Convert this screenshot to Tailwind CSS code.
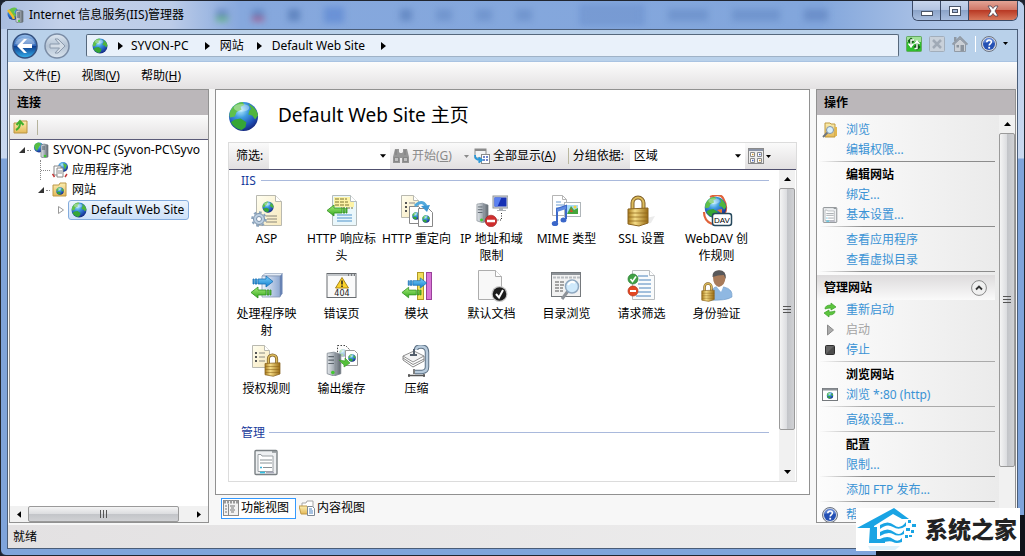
<!DOCTYPE html>
<html lang="zh-CN">
<head>
  <meta charset="UTF-8">
  <meta name="viewport" content="width=device-width, initial-scale=1.0">
  <title>Internet 信息服务(IIS)管理器</title>
  <script src="https://cdn.jsdelivr.net/npm/@tailwindcss/browser@4"></script>
</head>
<body class="bg-[#1c2230] font-['Noto_Sans','Noto_Sans_CJK_SC',sans-serif] text-xs text-black">

  <!-- Shared icon parts -->
  <svg class="absolute w-0 h-0" aria-hidden="true">
    <defs>
      <radialGradient id="sea" cx="40%" cy="28%" r="75%">
        <stop offset="0" stop-color="#b5ecff"/><stop offset=".35" stop-color="#3f9be0"/><stop offset=".75" stop-color="#1f4fb5"/><stop offset="1" stop-color="#16277a"/>
      </radialGradient>
      <linearGradient id="gold" x1="0" x2="1"><stop offset="0" stop-color="#a87a1c"/><stop offset=".35" stop-color="#f5dc86"/><stop offset="1" stop-color="#9a6c14"/></linearGradient>
      <linearGradient id="steel" x1="0" x2="1"><stop offset="0" stop-color="#e4e8ec"/><stop offset=".5" stop-color="#a3abb3"/><stop offset="1" stop-color="#5f676f"/></linearGradient>
      <linearGradient id="paper" x1="0" y1="0" x2="1" y2="1"><stop offset="0" stop-color="#fffef0"/><stop offset="1" stop-color="#f7e9bd"/></linearGradient>
      <linearGradient id="folder" x1="0" y1="0" x2="0" y2="1"><stop offset="0" stop-color="#fbeeb2"/><stop offset="1" stop-color="#e5b958"/></linearGradient>
      <linearGradient id="backBlue" x1="0" y1="0" x2="0" y2="1"><stop offset="0" stop-color="#9cc3ee"/><stop offset=".48" stop-color="#2f66b8"/><stop offset=".5" stop-color="#0d3a8c"/><stop offset="1" stop-color="#35b3ee"/></linearGradient>
      <linearGradient id="fwdGray" x1="0" y1="0" x2="0" y2="1"><stop offset="0" stop-color="#dde6f0"/><stop offset=".5" stop-color="#b4c3d4"/><stop offset="1" stop-color="#dbe5ef"/></linearGradient>
      <linearGradient id="cube" x1="0" x2="1"><stop offset="0" stop-color="#eef4fc"/><stop offset="1" stop-color="#8fa9d2"/></linearGradient>
      <linearGradient id="blueArr" x1="0" y1="0" x2="0" y2="1"><stop offset="0" stop-color="#7fd2fb"/><stop offset="1" stop-color="#0f7fd0"/></linearGradient>
      <linearGradient id="greenArr" x1="0" y1="0" x2="0" y2="1"><stop offset="0" stop-color="#a8ee7c"/><stop offset="1" stop-color="#34a81c"/></linearGradient>
    </defs>
    <symbol id="globe" viewBox="0 0 32 32">
      <circle cx="16" cy="16" r="15" fill="url(#sea)"/>
      <path d="M3 9C6 4 11 1 15 1l2 3-4 2 1 3-5 2-2 5-5 1C1 14 2 11 3 9z" fill="#5fc04a"/>
      <path d="M21 3c5 2 9 6 10 12l-3 4-3-4-4-1 1-4 2-2z" fill="#4fb53c"/>
      <path d="M7 19l6-1 6 4-1 5-4 3c-5-1-9-4-11-8z" fill="#36a636"/>
      <ellipse cx="14" cy="7" rx="8" ry="4" fill="#fff" opacity=".35"/>
    </symbol>
    <symbol id="lock" viewBox="0 0 22 32">
      <path d="M5.500 15V8a5.500 5.500 0 0 1 11 0v7" fill="none" stroke="#80602a" stroke-width="4"/>
      <path d="M5.500 15V8a5.500 5.500 0 0 1 11 0v7" fill="none" stroke="#dcbc5c" stroke-width="2"/>
      <path d="M1 14l20-1v15l-9 3-11-2z" fill="url(#gold)" stroke="#8a6420"/>
      <path d="M1 18h20M1 22h20M1 26h20" stroke="#8a6218" opacity=".7"/>
    </symbol>
    <symbol id="server" viewBox="0 0 14 22">
      <path d="M1 2l6-1 6 2v17l-6 2-6-2z" fill="url(#steel)" stroke="#7c858d" stroke-width=".7"/>
      <path d="M2 5h5M2 8h5M2 11h5" stroke="#5d666e"/>
      <path d="M8 2v19" stroke="#808890" stroke-width=".6"/>
      <circle cx="6" cy="19" r="1.600" fill="#43c832"/>
    </symbol>
    <symbol id="arrowBlue" viewBox="0 0 22 13">
      <path d="M1 4h1v5H1zM3 4h2v5H3zM6 4h8V1l7 5.500-7 5.500V9H6z" fill="url(#blueArr)" stroke="#1b6eb4" stroke-width=".8"/>
    </symbol>
    <symbol id="arrowGreen" viewBox="0 0 22 13">
      <path d="M21 4h-1v5h1zM19 4h-2v5h2zM16 4H8V1L1 6.500 8 12V9h8z" fill="url(#greenArr)" stroke="#2f8f1e" stroke-width=".8"/>
    </symbol>
    <symbol id="help" viewBox="0 0 16 16">
      <circle cx="8" cy="8" r="7.500" fill="#d5d9e2" stroke="#6b7382"/>
      <circle cx="8" cy="8" r="6" fill="#2450b4"/>
      <path d="M2.500 7a5.500 5.500 0 0 1 11 0q-5-2-11 0z" fill="#7c9fe4" opacity=".6"/>
      <path d="M5.800 6.300c0-3 4.600-3 4.600-.3C10.400 7.600 8.200 7.500 8.200 9.500" fill="none" stroke="#fff" stroke-width="1.600"/>
      <rect x="7.300" y="10.800" width="1.800" height="1.800" fill="#fff"/>
    </symbol>
    <symbol id="form" viewBox="0 0 24 26">
      <rect x="1" y="1" width="22" height="24" rx="1" fill="#eef0f2" stroke="#7a8084" stroke-width="1.400"/>
      <path d="M18 2.500h4" stroke="#5c6468"/>
      <path d="M4 22V5h3l1 1.500h11V22z" fill="#fff" stroke="#9aa0a4"/>
      <path d="M6 10.500h12M6 13.500h12M9 18h9" stroke="#8a9196" stroke-width="1.200"/>
      <path d="M6 18h2" stroke="#3bb0d8" stroke-width="1.500"/>
      <path d="M6 23h5" stroke="#30c0e4" stroke-width="1.600"/><path d="M12 23h8" stroke="#aab" stroke-width="1.600"/>
    </symbol>
    <symbol id="down" viewBox="0 0 7 4"><path d="M0 0h7L3.500 4z" fill="currentColor"/></symbol>
    <symbol id="right" viewBox="0 0 5 8"><path d="M0 0l5 4-5 4z" fill="currentColor"/></symbol>
  </svg>

  <div class="flex h-screen flex-col overflow-hidden rounded-t-lg rounded-b-md border border-[#20252f] bg-[linear-gradient(to_bottom,#bccfec_0px,#c9d8ef_157px,#7fa4db_158px,#7fa4db_100%)] px-[6px] pb-[6px]">

    <!-- Title bar -->
    <header class="-mx-[6px] flex h-7 shrink-0 items-center bg-[linear-gradient(to_right,#a9bddf_0px,#c3d1ea_60px,#bccce8_170px,#86a8dd_240px,#82a6dc_80%,#a8c0e5_90%,#b9cdeb_100%)] pl-[6px] pr-[6px]">
      <svg class="mr-1 h-4 w-[18px]" viewBox="0 0 18 16">
        <circle cx="6.500" cy="7" r="6" fill="url(#sea)"/><path d="M1 4q4-5 9-3L7 5l3 4-5 1z" fill="#67c147"/>
        <path d="M1 3q5 6 6 9" stroke="#f2bd27" stroke-width="2.500" fill="none"/>
        <path d="M9 4l3-1 4 1v11l-4 1-3-1z" fill="url(#steel)" stroke="#6c757d" stroke-width=".7"/><path d="M10 6h3M10 8h3M10 10h3" stroke="#47515a"/><circle cx="12" cy="14" r="1" fill="#41c832"/>
      </svg>
      <h1 class="shrink-0">Internet 信息服务(IIS)管理器</h1>
      <div class="ml-8 flex h-6 flex-1 items-center gap-6 overflow-hidden text-[#365a95]/50 blur-[3px]" aria-hidden="true">
        <i class="h-3 w-3 border-b-4 border-[#5fb67a] bg-[#4a6fae]/50"></i>
        <i class="h-3 w-3 border-b-4 border-[#a85a8c] bg-[#4a6fae]/50"></i>
        <i class="h-3 w-3 bg-[#4a6fae]/60"></i>
        <i class="h-4 w-5 bg-[#6a92d6]"></i>
        <i class="ml-8 h-3 w-3 bg-[#4a6fae]/50"></i>
        <i class="h-3 w-4 bg-[#4a6fae]/30"></i>
        <i class="h-3 w-4 bg-[#4a6fae]/30"></i>
        <i class="h-3 w-4 bg-[#4a6fae]/30"></i>
        <i class="ml-6 h-5 w-16 border-2 border-[#6d93d2] bg-[#4a6fae]/20"></i>
        <i class="h-3 w-10 bg-[#4a6fae]/30"></i>
        <i class="h-3 w-12 bg-[#4a6fae]/30"></i>
        <i class="h-3 w-6 bg-[#4a6fae]/40"></i>
      </div>
      <div class="flex h-5 self-start overflow-hidden rounded-b-md border border-t-0 border-[#3b4a66]">
        <button type="button" aria-label="最小化" class="flex w-7 items-center justify-center border-r border-[#3b4a66] bg-[linear-gradient(#c8d6ec,#b3c4e0_48%,#8ca4c9_50%,#a9bedf)]"><svg class="h-3 w-3" viewBox="0 0 12 12"><rect x=".5" y="6.500" width="11" height="4" fill="#fff" stroke="#4a5568"/></svg></button>
        <button type="button" aria-label="最大化" class="flex w-7 items-center justify-center border-r border-[#3b4a66] bg-[linear-gradient(#c8d6ec,#b3c4e0_48%,#8ca4c9_50%,#a9bedf)]"><svg class="h-3 w-3" viewBox="0 0 12 12"><rect x=".5" y="1.500" width="11" height="9" fill="#fff" stroke="#4a5568"/><rect x="3.500" y="4.500" width="5" height="3" fill="#a5b8d8" stroke="#4a5568"/></svg></button>
        <button type="button" aria-label="关闭" class="flex w-12 items-center justify-center bg-[linear-gradient(#e3a496,#cf7565_48%,#b93a25_50%,#d8785c)]"><svg class="h-3 w-3" viewBox="0 0 12 12"><path d="M1 1h3l2 2.500L8 1h3L8 6l3 5H8L6 8.500 4 11H1l3-5z" fill="#fff" stroke="#4b4350" stroke-width=".8"/></svg></button>
      </div>
    </header>

    <div class="flex min-h-0 flex-1 flex-col border border-[#4a5d78] bg-[#f7f7f7]">
      <!-- Address row -->
      <nav class="flex h-8 shrink-0 items-center border-b border-[#a9c3e2] bg-[#b9d1ea] pl-1">
        <button type="button" aria-label="后退"><svg class="h-[26px] w-[26px]" viewBox="0 0 26 26"><circle cx="13" cy="13" r="12" fill="url(#backBlue)" stroke="#33507f" stroke-width="1.500"/><path d="M3 11a10.500 9 0 0 1 20 0q-10 3-20 0z" fill="#fff" opacity=".3"/><path d="M5 13l7-7h3l-4.500 5H20v4h-9.500L15 20h-3z" fill="#fff"/></svg></button>
        <button type="button" aria-label="前进" class="ml-[6px]" disabled><svg class="h-[26px] w-[26px]" viewBox="0 0 26 26"><circle cx="13" cy="13" r="12" fill="url(#fwdGray)" stroke="#7a8ca5" stroke-width="1.500"/><path d="M21 13l-7-7h-3l4.500 5H6v4h9.500L11 20h3z" fill="#d3dce6" stroke="#8b9aad"/></svg></button>
        <ol class="ml-4 flex h-[23px] flex-1 items-center rounded-[2px] border border-[#56687c] border-b-[#9fb2c6] bg-[#e9f1fa] pl-[5px]">
          <li class="flex items-center"><svg class="h-4 w-4"><use href="#globe"/></svg><svg class="ml-[10px] mr-2 h-2 w-[5px]"><use href="#right"/></svg></li>
          <li class="flex items-center"><a href="#pc">SYVON-PC</a><svg class="ml-4 mr-[10px] h-2 w-[5px]"><use href="#right"/></svg></li>
          <li class="flex items-center"><a href="#sites">网站</a><svg class="ml-[13px] mr-[10px] h-2 w-[5px]"><use href="#right"/></svg></li>
          <li class="flex items-center"><a href="#default">Default Web Site</a><svg class="ml-4 h-2 w-[5px]"><use href="#right"/></svg></li>
        </ol>
        <div class="ml-[7px] flex items-center gap-[7px] pb-1">
          <button type="button" aria-label="刷新"><svg class="h-4 w-4" viewBox="0 0 16 16"><rect x=".5" y=".5" width="15" height="15" rx="1" fill="#2fc02c" stroke="#64a864"/><path d="M1 1h14v5H1z" fill="#a0e298"/><path d="M5 11V5M2.500 6L5 3.500 7.500 6M11 5v6M8.500 10l2.500 2.500L13.500 10" fill="none" stroke="#155a18" stroke-width="3"/><path d="M8 4H5v7M2.500 7.500L5 11l2.500-3.500M8.500 12.500H11V5M8.500 8L11 5l2.500 3" fill="none" stroke="#fff" stroke-width="1.400"/></svg></button>
          <button type="button" aria-label="停止加载" disabled><svg class="h-4 w-4" viewBox="0 0 16 16"><rect x=".5" y=".5" width="15" height="15" rx="1" fill="#c9d1da" stroke="#a2aebb"/><path d="M4 4l8 8M12 4l-8 8" stroke="#a0aab6" stroke-width="2.500"/></svg></button>
          <button type="button" aria-label="主页" disabled><svg class="h-4 w-4" viewBox="0 0 16 16"><path d="M2 1h2.500v4H2z" fill="#8e98a3"/><path d="M2.500 8L8 3l5.500 5v7.500h-11z" fill="#cbd0d6" stroke="#929ba5"/><path d="M.5 8.500L8 1l7.500 7.500" fill="none" stroke="#929ba5" stroke-width="1.800"/><path d="M8.500 9H12v6H8.500zM4.500 9H7v2.500H4.500z" fill="#8b949e"/></svg></button>
          <span class="h-4 w-px bg-white"></span>
          <button type="button" aria-label="帮助" class="-ml-[2px] mr-[9px] flex items-center gap-[6px]"><svg class="h-4 w-4"><use href="#help"/></svg><svg class="h-[3px] w-[5px]"><use href="#down"/></svg></button>
        </div>
      </nav>

      <!-- Menu bar -->
      <div role="menubar" class="flex h-[27px] shrink-0 items-center gap-[21px] bg-[linear-gradient(#fcfcfc,#e3e1e2)] pl-[15px]">
        <button type="button" role="menuitem">文件(<u>F</u>)</button>
        <button type="button" role="menuitem">视图(<u>V</u>)</button>
        <button type="button" role="menuitem">帮助(<u>H</u>)</button>
      </div>

      <main class="flex min-h-0 flex-1 gap-[6px] px-px">
        <!-- Connections -->
        <section class="mb-[2px] flex w-[200px] shrink-0 flex-col border border-[#919191] bg-white">
          <h2 class="flex h-[25px] shrink-0 items-center bg-[#bbb7ba] pl-[7px] font-bold">连接</h2>
          <div class="flex h-[25px] shrink-0 items-center border-b border-[#5a5a78] bg-[linear-gradient(#fbfbfb,#e4e2e3)] pl-[3px]">
            <button type="button" aria-label="向上"><svg class="h-4 w-4" viewBox="0 0 16 16"><path d="M1 4h6l1-2h6v12H1z" fill="url(#folder)" stroke="#b99442"/><path d="M3 11q4-2 4-7M3.500 6L7 2l3.500 4" fill="none" stroke="#41b02d" stroke-width="2"/></svg></button>
            <span class="ml-2 h-[15px] w-px bg-[#b5b39c]"></span>
          </div>
          <ul class="min-h-0 flex-1 overflow-hidden whitespace-nowrap" role="tree">
            <li role="treeitem" class="flex h-5 w-max items-center pl-[9px]">
              <svg class="h-[6px] w-[6px]" viewBox="0 0 6 6"><path d="M6 0v6H0z" fill="#333"/></svg>
              <i class="mx-[2px] w-1 border-t border-dotted border-[#888]"></i>
              <svg class="mr-1 h-4 w-4" viewBox="0 0 16 16"><circle cx="6" cy="5.500" r="5" fill="url(#sea)"/><path d="M2 2q4-3 6 0L6 5l-2 4q-4-3-2-7z" fill="#56bd42"/><path d="M8 3l3-1 4 1v12l-4 1-3-1z" fill="url(#steel)" stroke="#747d85" stroke-width=".7"/><path d="M9 5h3M9 7h3" stroke="#515b64"/><circle cx="12" cy="14" r="1.300" fill="#41c832"/></svg>
              SYVON-PC (Syvon-PC\Syvo
            </li>
            <li role="treeitem" class="flex h-5 items-center pl-[30px]">
              <i class="h-5 border-l border-dotted border-[#888]"></i>
              <i class="mr-[2px] w-[9px] border-t border-dotted border-[#888]"></i>
              <svg class="mr-1 h-4 w-4" viewBox="0 0 16 16"><circle cx="11" cy="5" r="5" fill="url(#sea)"/><path d="M11 1l4 2-2 5z" fill="#54ba40"/><path d="M2 4h7v9H2z" fill="#fff" stroke="#888"/><path d="M5 6h6v9H5z" fill="#fff" stroke="#888"/><path d="M6 9h4M6 11h4" stroke="#8d8d8d"/><path d="M.5 12l2 3M13 15l2-3" stroke="#c43737" stroke-width="1.500"/></svg>
              应用程序池
            </li>
            <li role="treeitem" class="flex h-5 items-center pl-[28px]">
              <svg class="h-[6px] w-[6px]" viewBox="0 0 6 6"><path d="M6 0v6H0z" fill="#333"/></svg>
              <i class="mx-[2px] w-1 border-t border-dotted border-[#888]"></i>
              <svg class="mr-1 h-4 w-4" viewBox="0 0 16 16"><path d="M1 3h6l1-2h6v13H1z" fill="url(#folder)" stroke="#bd9846"/><use href="#globe" x="4" y="5" width="8" height="8"/></svg>
              网站
            </li>
            <li role="treeitem" class="flex h-5 items-center pl-12" aria-selected="true">
              <svg class="h-2 w-[6px]" viewBox="0 0 6 8"><path d="M.5.5l5 3.500-5 3.500z" fill="#fff" stroke="#9a9a9a"/></svg>
              <span class="ml-1 flex h-5 items-center rounded-[3px] border border-[#84acdd] bg-[linear-gradient(#ecf4fd,#cde1f9)] px-1 pl-[2px]"><svg class="mr-1 h-4 w-4"><use href="#globe"/></svg>Default Web Site</span>
            </li>
          </ul>
          <div class="flex h-4 shrink-0 items-stretch bg-[#f1f1f1]" aria-hidden="true">
            <span class="flex w-[18px] items-center justify-center"><svg class="h-[7px] w-1 rotate-180"><use href="#right" width="4" height="7"/></svg></span>
            <span class="flex-1"><span class="flex h-full w-[93%] items-center justify-center gap-[2px] rounded-[2px] border border-[#9a9a9a] bg-[linear-gradient(#f4f4f4,#dcdde0_48%,#c3c5c9_52%,#d0d1d4)]"><i class="h-2 w-px bg-[#555]"></i><i class="h-2 w-px bg-[#555]"></i><i class="h-2 w-px bg-[#555]"></i></span></span>
            <span class="flex w-[18px] items-center justify-center"><svg class="h-[7px] w-1"><use href="#right" width="4" height="7"/></svg></span>
          </div>
        </section>

        <!-- Feature view -->
        <section class="flex min-w-0 flex-1 flex-col">
          <div class="flex min-h-0 flex-1 flex-col border border-[#919191] bg-white px-3 pb-3">
            <h2 class="flex h-[52px] shrink-0 items-center text-[19px]"><svg class="mr-[19px] h-[31px] w-[31px]"><use href="#globe"/></svg>Default Web Site 主页</h2>
            <div class="flex min-h-0 flex-1 flex-col border border-[#dcdcdc]">
              <div class="flex h-[27px] shrink-0 items-center whitespace-nowrap border-b border-[#50506e] bg-[linear-gradient(#fafafa,#e2e0e1)] pl-[7px]">
                <label for="filter" class="w-[33px]">筛选:</label>
                <div class="relative w-[121px] self-stretch">
                  <input id="filter" type="text" class="h-full w-full bg-white px-1 outline-none">
                  <svg class="absolute top-[11px] right-1 h-1 w-[6px]"><use href="#down" width="6" height="4"/></svg>
                </div>
                <button type="button" class="ml-[3px] flex items-center text-[#8a8a8a]" disabled>
                  <svg class="mr-[3px] h-4 w-4" viewBox="0 0 16 16"><path d="M2 1h4v3l1 1h2l1-1V1h4l2 8v6H9v-5H7v5H0V9z" fill="#969696"/><path d="M1.500 9.500h4v4h-4zM10.500 9.500h4v4h-4zM3 2v5M12 2v5" fill="#c0c0c0" stroke="#777" stroke-width=".7"/></svg>
                  开始(<u>G</u>)<svg class="ml-3 h-[3px] w-[5px]"><use href="#down" width="5" height="3"/></svg>
                </button>
                <button type="button" class="ml-[5px] flex items-center">
                  <svg class="mr-[3px] h-4 w-4" viewBox="0 0 16 16"><rect x="1" y="1" width="11" height="9" fill="#f4f4f4" stroke="#8b8b8b"/><path d="M1 2h11" stroke="#8b8b8b" stroke-width="2"/><rect x="7.500" y="6.500" width="8" height="9" fill="#fff" stroke="#8b8b8b"/><path d="M9 9h2M12 9h2M9 12h2M12 12h2" stroke="#4660b8" stroke-width="1.500"/><path d="M1 7q0 5 5 5M4.500 9.500L8 12l-3.500 2.500" fill="none" stroke="#2897d8" stroke-width="1.800"/></svg>
                  全部显示(<u>A</u>)
                </button>
                <span class="ml-3 mr-1 h-4 w-px bg-[#bab89f]"></span>
                <label for="group" class="w-[57px]">分组依据:</label>
                <div class="relative w-[115px] self-stretch">
                  <select id="group" class="h-full w-full appearance-none bg-white pl-1 outline-none"><option>区域</option><option>类别</option><option>不分组</option></select>
                  <svg class="pointer-events-none absolute top-[11px] right-1 h-1 w-[6px]"><use href="#down" width="6" height="4"/></svg>
                </div>
                <button type="button" aria-label="视图" class="ml-[3px] flex items-center gap-[2px]">
                  <svg class="h-4 w-4" viewBox="0 0 16 16"><rect x=".5" y=".5" width="15" height="15" fill="#eee" stroke="#8a8a8a"/><path d="M1 2h14" stroke="#8a93a6" stroke-width="2"/><path d="M2.500 4.500h4v4h-4zM9.500 4.500h4v4h-4zM2.500 10.500h4v4h-4zM9.500 10.500h4v4h-4z" fill="#fff" stroke="#8a8a8a"/><path d="M4 6.500h1.500M11 12.500h1.500" stroke="#d89c30" stroke-width="1.500"/><path d="M11 6.500h1.500M4 12.500h1.500" stroke="#4562c4" stroke-width="1.500"/></svg>
                  <svg class="h-[3px] w-[5px]"><use href="#down" width="5" height="3"/></svg>
                </button>
              </div>

              <div class="flex min-h-0 flex-1">
                <div class="min-w-0 flex-1 overflow-hidden">
                  <h3 class="mr-[10px] flex h-[25px] items-center gap-[5px] pb-1 pl-3 text-[#1a3c9c]">IIS<span class="h-px flex-1 bg-[#a9b9dc]"></span></h3>
                  <ul class="grid grid-cols-[repeat(auto-fill,75px)] auto-rows-[75px] text-center leading-[17px]">
                    <li class="px-[2px]">
                      <svg class="mx-auto mb-[3px] h-8 w-8" viewBox="0 0 32 32"><path d="M5.500.5h19l6 6v24h-25z" fill="url(#paper)" stroke="#b9b9b0"/><path d="M24.500.5v6h6" fill="#fff" stroke="#b9b9b0"/><use href="#globe" x="11" y="6" width="12" height="12"/><path d="M15 21h11M16 24h10M15 27h11" stroke="#8a8678"/><circle cx="8" cy="24" r="5.500" fill="#bed0e2" stroke="#7890aa"/><circle cx="8" cy="24" r="6.800" fill="none" stroke="#8aa2bb" stroke-width="2" stroke-dasharray="2.700 2.600"/><circle cx="8" cy="24" r="2.500" fill="#fff" stroke="#7890aa"/></svg>
                      ASP
                    </li>
                    <li class="px-[2px]">
                      <svg class="mx-auto mb-[3px] h-8 w-8" viewBox="0 0 32 32"><path d="M6.500.5h18l6 6v24h-24z" fill="#eaf7fb" stroke="#b4bcbc"/><path d="M8 2h16l4 4v6H8z" fill="#fdf3a6"/><path d="M24.500.5v6h6" fill="#fff" stroke="#b4bcbc"/><path d="M9 4h12M9 7h4M14 7h8M9 10h14M15 13h12" stroke="#7c7430" stroke-dasharray="4 1"/><path d="M11 20h15M11 23h15M11 26h15" stroke="#4f93cc" stroke-width="1.200"/><use href="#arrowGreen" x="0" y="8" width="22" height="15"/></svg>
                      HTTP 响应标头
                    </li>
                    <li class="px-[2px]">
                      <svg class="mx-auto mb-[3px] h-8 w-8" viewBox="0 0 32 32"><path d="M.5.5h12l5 5v17H.5z" fill="url(#paper)" stroke="#b9b9b0"/><path d="M12.500.5v5h5" fill="#fff" stroke="#b9b9b0"/><path d="M4 8h2M4 12h2M4 16h2" stroke="#555" stroke-width="2"/><path d="M8 8h6M8 12h5M8 16h5" stroke="#888"/><path d="M8.500 11.500h9l3 3v14h-12z" fill="#fff" stroke="#888"/><use href="#globe" x="11" y="17" width="8" height="8"/><path d="M17.500 13.500h10l4 4v14h-14z" fill="#fff" stroke="#888"/><use href="#globe" x="21" y="20" width="8" height="8"/><path d="M14 11q7-7 11 0" fill="none" stroke="#52a9dc" stroke-width="3"/><path d="M20 11l9-1-3 7z" fill="#3c97d3"/></svg>
                      HTTP 重定向
                    </li>
                    <li class="px-[2px]">
                      <svg class="mx-auto mb-[3px] h-8 w-8" viewBox="0 0 32 32"><use href="#server" x="0" y="7" width="13" height="21"/><rect x="17" y="1" width="15" height="12" fill="#d8dadc" stroke="#8e9499"/><rect x="18.500" y="2.500" width="12" height="9" fill="#1630b4"/><path d="M18.500 2.500h7l-4 9h-3z" fill="#5a80f0"/><path d="M23 13h4v2h3v1h-9v-1h2z" fill="#a9aeb3"/><path d="M25.500 18v7H21" fill="none" stroke="#333" stroke-dasharray="1 1.500"/><circle cx="15" cy="26" r="5.800" fill="#cf2e2e" stroke="#9b1c1c" stroke-width=".6"/><path d="M11 26h8" stroke="#fff" stroke-width="2.400"/></svg>
                      IP 地址和域限制
                    </li>
                    <li class="px-[2px]">
                      <svg class="mx-auto mb-[3px] h-8 w-8" viewBox="0 0 32 32"><path d="M1.500.5h10l4 4v16h-14z" fill="#fff" stroke="#b5b5b5"/><path d="M11.500.5v4h4" fill="none" stroke="#b5b5b5"/><path d="M5 7h5M5 10h8M5 13h4" stroke="#6a9cd0"/><rect x="13.500" y="7.500" width="16" height="14" fill="#fff" stroke="#b0b6ba"/><rect x="16" y="10" width="11" height="9" fill="#a6dbf8"/><path d="M16 19l4-8 3 4 4-2v6z" fill="#45a63b"/><circle cx="24" cy="12" r="1.500" fill="#f5d23c"/><path d="M20 13l2 4h-3z" fill="#d34e2a"/><path d="M6 27V14l9-3v13" fill="none" stroke="#3c68c8" stroke-width="2"/><path d="M6 14l9-3v3l-9 3z" fill="#5d8ae0"/><ellipse cx="4" cy="28.500" rx="3.200" ry="2.600" fill="#3b67c9"/><ellipse cx="12.500" cy="25" rx="3" ry="2.500" fill="#3b67c9"/></svg>
                      MIME 类型
                    </li>
                    <li class="px-[2px]">
                      <svg class="mx-auto mb-[3px] h-8 w-8" viewBox="0 0 32 32"><path d="M20 23l9-2-4 7-7 2z" fill="#000" opacity=".08"/><use href="#lock" x="1" y="0" width="22" height="32"/></svg>
                      SSL 设置
                    </li>
                    <li class="px-[2px]">
                      <svg class="mx-auto mb-[3px] h-8 w-8" viewBox="0 0 32 32"><path d="M9 2q10-4 13 1 7 12-2 20M3 17q0 9 8 12" fill="none" stroke="#e0633a" stroke-width="2.200"/><use href="#globe" x="3" y="1" width="23" height="23"/><path d="M16 15l5-1v5z" fill="#ee7a30"/><rect x="11.500" y="18.500" width="19" height="12" rx="2.500" fill="#fff" stroke="#26485c" stroke-width="1.500"/><text x="21" y="27.500" text-anchor="middle" font-size="8" font-family="Liberation Sans, sans-serif" fill="#000">DAV</text></svg>
                      WebDAV 创作规则
                    </li>
                    <li class="px-[2px]">
                      <svg class="mx-auto mb-[3px] h-8 w-8" viewBox="0 0 32 32"><path d="M11 6l3-2.500h17.500L29 6z" fill="#e4ecf7" stroke="#8798b4" stroke-width=".6"/><path d="M11 6h18v21H11z" fill="url(#cube)" stroke="#8798b4" stroke-width=".8"/><path d="M29 6l2.500-2.500v20L29 27z" fill="#6883b4"/><use href="#arrowBlue" x="1" y="5" width="22" height="13"/><use href="#arrowGreen" x="-1" y="16" width="22" height="13"/></svg>
                      处理程序映射
                    </li>
                    <li class="px-[2px]">
                      <svg class="mx-auto mb-[3px] h-8 w-8" viewBox="0 0 32 32"><rect x="1" y="3.500" width="29" height="24" fill="#fafafa" stroke="#686c70"/><path d="M1.500 5h28" stroke="#c2c6ca" stroke-width="2"/><path d="M22 5h1M25 5h1M28 5h1" stroke="#333"/><path d="M16 7.500L22.500 18h-13z" fill="#fcd329" stroke="#a8851c"/><path d="M16 10.500v4M16 15.500v1.500" stroke="#222" stroke-width="1.500"/><text x="16" y="26" text-anchor="middle" font-size="8" font-family="DejaVu Sans, sans-serif" fill="#222">404</text></svg>
                      错误页
                    </li>
                    <li class="px-[2px]">
                      <svg class="mx-auto mb-[3px] h-8 w-8" viewBox="0 0 32 32"><rect x="16.500" y="2.500" width="6" height="27" fill="#f2df5a" stroke="#b09a26"/><rect x="25.500" y="2.500" width="5" height="27" fill="#d976d6" stroke="#99419a"/><use href="#arrowBlue" x="6" y="7" width="21" height="12"/><use href="#arrowGreen" x="0" y="16" width="21" height="13"/></svg>
                      模块
                    </li>
                    <li class="px-[2px]">
                      <svg class="mx-auto mb-[3px] h-8 w-8" viewBox="0 0 32 32"><path d="M2.500.5h17l6 6v23h-23z" fill="#f8f8f8" stroke="#adadad"/><path d="M19.500.5v6h6" fill="#fff" stroke="#adadad"/><circle cx="23.500" cy="24" r="8" fill="#c8c8c8"/><circle cx="23.500" cy="24" r="6.800" fill="#1c1c1c"/><path d="M20 24l3 3.500 4-7.500" fill="none" stroke="#fff" stroke-width="2"/></svg>
                      默认文档
                    </li>
                    <li class="px-[2px]">
                      <svg class="mx-auto mb-[3px] h-8 w-8" viewBox="0 0 32 32"><rect x=".5" y="2.500" width="29" height="24" fill="#f2f2f2" stroke="#75797d"/><path d="M1 4h28" stroke="#8f9499" stroke-width="2"/><path d="M2 7.500h27" stroke="#b9bdc1" stroke-width="2" stroke-dasharray="3 1"/><path d="M4 12h10M4 15h10M4 18h8M4 21h8" stroke="#555" stroke-dasharray="4 1"/><path d="M17 21l-6 8" stroke="#8d9298" stroke-width="3"/><circle cx="21" cy="16.500" r="6.500" fill="#cfe9fb" stroke="#8fa8c0" stroke-width="1.500"/><path d="M17 15q3-5 7-2" stroke="#fff" stroke-width="2" fill="none"/></svg>
                      目录浏览
                    </li>
                    <li class="px-[2px]">
                      <svg class="mx-auto mb-[3px] h-8 w-8" viewBox="0 0 32 32"><path d="M6.500.5h17l5 5v24h-22z" fill="#f9fbfc" stroke="#b9bdc0"/><path d="M23.500.5v5h5" fill="#fff" stroke="#b9bdc0"/><path d="M12 6h10M13 10h12M12 14h13M13 18h12M12 22h13M10 26h15" stroke="#4c84bc"/><circle cx="7" cy="9" r="5" fill="#3fa245" stroke="#2b7a34" stroke-width=".7"/><path d="M4.500 9l2 2.500L10 6.500" fill="none" stroke="#fff" stroke-width="1.600"/><circle cx="7" cy="21" r="5" fill="#e34824" stroke="#b03214" stroke-width=".7"/><path d="M4 21h6" stroke="#fff" stroke-width="2"/></svg>
                      请求筛选
                    </li>
                    <li class="px-[2px]">
                      <svg class="mx-auto mb-[3px] h-8 w-8" viewBox="0 0 32 32"><path d="M8 30q0-12 9-14l6 1q9 2 8 10-6 4-23 3z" fill="#8fb8e2" stroke="#6f98c4" stroke-width=".6"/><path d="M15 16l5 6 3-7z" fill="#fff"/><path d="M12 7q0-6 6-6.500 7 0 6.500 7-.5 8-6.500 9.500-6-2-6-10z" fill="#a97b5a"/><path d="M11.500 7Q11 .5 18 .3q7.500 0 6.800 8.700l-2-4q-6 0-11.300 2z" fill="#58585a"/><use href="#lock" x="0" y="12" width="14" height="20"/></svg>
                      身份验证
                    </li>
                    <li class="px-[2px]">
                      <svg class="mx-auto mb-[3px] h-8 w-8" viewBox="0 0 32 32"><path d="M1.500.5h12l5 5v17h-17z" fill="url(#paper)" stroke="#b9b9b0"/><path d="M13.500.5v5h5" fill="#fff" stroke="#b9b9b0"/><path d="M4 8h2M4 12h2M4 16h2" stroke="#555" stroke-width="2"/><path d="M8 8h6M8 12h6M8 16h6" stroke="#8a8a80"/><use href="#lock" x="13" y="8" width="17" height="24"/></svg>
                      授权规则
                    </li>
                    <li class="px-[2px]">
                      <svg class="mx-auto mb-[3px] h-8 w-8" viewBox="0 0 32 32"><path d="M11.500.5h8l4 4v14h-12z" fill="#fdfdfd" stroke="#444" stroke-dasharray="1.500 1.500"/><use href="#globe" x="13" y="4" width="8" height="8" opacity=".4"/><use href="#server" x="0" y="6" width="16" height="25"/><path d="M19.500 5.500h9l3 3v12h-12z" fill="#fff" stroke="#999"/><use href="#globe" x="22" y="9" width="8" height="8"/><path d="M13 15l6 1v-3l5 5-6 4v-2z" fill="#55c03b" stroke="#369624" stroke-width=".6"/></svg>
                      输出缓存
                    </li>
                    <li class="px-[2px]">
                      <svg class="mx-auto mb-[3px] h-8 w-8" viewBox="0 0 32 32"><path d="M15 5q0-3.500 5-3.500 6 0 6 6V22q0 4.500-5 5h-7" fill="none" stroke="#5e7286" stroke-width="4.500"/><path d="M15 5q0-3.500 5-3.500 6 0 6 6V22q0 4.500-5 5h-7" fill="none" stroke="#b8cbdc" stroke-width="2.500"/><path d="M2 11l11-5 10 5-11 6z" fill="#f4f4f4" stroke="#777" stroke-width=".8"/><path d="M2 11v4l10 7 11-6v-5M2 13l10 6.500L23 14" fill="none" stroke="#888"/><path d="M13 4v6M9 10h7" stroke="#55606c" stroke-width="2"/><path d="M13 24v5M7 30.500h17M8 29v3M23 29v3" stroke="#555" stroke-width="1.500"/></svg>
                      压缩
                    </li>
                  </ul>
                  <h3 class="mt-[2px] mr-[10px] flex h-[25px] items-center gap-1 pb-1 pl-3 text-[#1a3c9c]">管理<span class="h-px flex-1 bg-[#a9b9dc]"></span></h3>
                  <ul class="grid grid-cols-[repeat(auto-fill,75px)]">
                    <li class="px-[2px]"><svg class="mx-auto h-8 w-8" viewBox="0 0 32 32"><use href="#form" x="3" y="2" width="24" height="27"/></svg></li>
                  </ul>
                </div>
                <div class="mr-px flex w-4 flex-col bg-[#f1f1f1]" aria-hidden="true">
                  <span class="flex h-[18px] items-center justify-center"><svg class="h-1 w-[7px] rotate-180"><use href="#down"/></svg></span>
                  <span class="min-h-0 flex-1"><span class="flex h-[88%] flex-col items-center justify-center gap-[2px] rounded-[2px] border border-[#9a9a9a] bg-[linear-gradient(to_right,#f4f4f4,#dcdde0_48%,#c3c5c9_52%,#d0d1d4)]"><i class="h-px w-2 bg-[#555]"></i><i class="h-px w-2 bg-[#555]"></i><i class="h-px w-2 bg-[#555]"></i></span></span>
                  <span class="flex h-[18px] items-center justify-center"><svg class="h-1 w-[7px]"><use href="#down"/></svg></span>
                </div>
              </div>
            </div>
          </div>
          <div class="flex h-[30px] shrink-0 items-center gap-[2px] pb-1 pl-[6px]">
            <button type="button" class="flex h-[21px] items-center gap-[2px] border border-[#3399ff] bg-white pl-px pr-[6px]">
              <svg class="h-4 w-4" viewBox="0 0 16 16"><rect x=".5" y=".5" width="15" height="15" fill="#f2f2f2" stroke="#8a8a8a"/><path d="M1 2h14" stroke="#9a9a9a" stroke-width="3" stroke-dasharray="2 1"/><path d="M5.500 4v11" stroke="#8a8a8a"/><path d="M2 6h2M2 9h2M2 12h2M7 6h5M8 8h3M7 10h5M8 12h3" stroke="#777"/></svg>功能视图
            </button>
            <button type="button" class="flex h-[21px] items-center gap-[2px] pl-px">
              <svg class="h-4 w-4" viewBox="0 0 16 16"><path d="M3 3h4l1-2h6v10H3z" fill="#fff" stroke="#a5a5a5"/><path d="M0 6h8l3 8H2z" fill="url(#folder)" stroke="#c09a48"/><path d="M8.500 6.500h5l2 2v7h-7z" fill="#fff" stroke="#7d8894"/><path d="M10 9h3M10 11h4M10 13h4" stroke="#4f86c4"/></svg>内容视图
            </button>
          </div>
        </section>

        <!-- Actions -->
        <aside class="mb-[2px] flex w-[200px] shrink-0 flex-col border border-[#919191]">
          <h2 class="flex h-[25px] shrink-0 items-center bg-[#bbb7ba] pl-[7px] font-bold">操作</h2>
          <div class="flex min-h-0 flex-1 bg-[linear-gradient(to_right,#fcfcfc,#e9e9e9)]">
            <div class="min-w-0 flex-1 overflow-hidden pt-[5px] pr-1 pl-[2px] leading-5 text-[#3a93d5]">
              <a href="#explore" class="flex h-5 items-center gap-2 pl-[3px]"><svg class="h-4 w-4" viewBox="0 0 16 16"><path d="M3 1h5l1 1h4v13H3z" fill="url(#folder)" stroke="#c09a3e"/><path d="M13 5h2v9h-2" fill="#e3b850"/><path d="M6 10l-5 5" stroke="#6f7780" stroke-width="2"/><circle cx="8" cy="8" r="3.500" fill="#d8effc" stroke="#7e93a8"/></svg>浏览</a>
              <a href="#permissions" class="block pl-[27px]">编辑权限...</a>
              <hr class="mt-px mb-[3px] h-px border-0 bg-[linear-gradient(to_right,transparent,#8c8c8c_25%)]">
              <h3 class="pl-[27px] font-bold text-black">编辑网站</h3>
              <a href="#bindings" class="block pl-[27px]">绑定...</a>
              <a href="#basic" class="flex h-5 items-center gap-2 pl-[3px]"><svg class="h-4 w-4"><use href="#form"/></svg>基本设置...</a>
              <hr class="mt-px mb-[3px] h-px border-0 bg-[linear-gradient(to_right,transparent,#8c8c8c_25%)]">
              <a href="#apps" class="block pl-[27px]">查看应用程序</a>
              <a href="#vdirs" class="block pl-[27px]">查看虚拟目录</a>
              <hr class="mt-px mb-[3px] h-px border-0 bg-[linear-gradient(to_right,transparent,#8c8c8c_25%)]">
              <h3 class="-ml-[2px] flex h-[25px] items-center justify-between bg-[linear-gradient(#dddbdc,#fafafa)] pr-2 pl-[7px] font-bold text-black">管理网站
                <button type="button" aria-label="折叠"><svg class="h-4 w-4" viewBox="0 0 16 16"><circle cx="8" cy="8" r="7.400" fill="#f0f0f0" stroke="#888"/><path d="M5 9.500l3-3 3 3" fill="none" stroke="#333" stroke-width="1.800"/></svg></button>
              </h3>
              <a href="#restart" class="flex h-5 items-center gap-2 pl-[3px]"><svg class="h-4 w-4" viewBox="0 0 16 16"><path d="M3 7q0-4 6-4V1l5 4-5 3V6Q6 6 3 7zM13 9q0 4-6 4v2l-5-4 5-3v2q3 0 6-1z" fill="#5cc63e" stroke="#3c9e2a" stroke-width=".7"/></svg>重新启动</a>
              <button type="button" class="flex h-5 w-full items-center gap-2 pl-[3px] text-[#a3a3a3]" disabled><svg class="h-4 w-4" viewBox="0 0 16 16"><path d="M5.500 3l6 5-6 5z" fill="#ababab" stroke="#8a8a8a"/></svg>启动</button>
              <a href="#stop" class="flex h-5 items-center gap-2 pl-[3px]"><svg class="h-4 w-4" viewBox="0 0 16 16"><rect x="3.500" y="3.500" width="9" height="9" rx="1" fill="#4c4c4c" stroke="#2e2e2e"/><path d="M4 4h8L4 12z" fill="#777" opacity=".6"/></svg>停止</a>
              <hr class="mt-px mb-[3px] h-px border-0 bg-[linear-gradient(to_right,transparent,#aaaaaa_25%)]">
              <h3 class="pl-[27px] font-bold text-black">浏览网站</h3>
              <a href="#browse80" class="flex h-5 items-center gap-2 pl-[3px]"><svg class="h-4 w-4" viewBox="0 0 16 16"><rect x=".5" y="1.500" width="15" height="12" fill="#fff" stroke="#75797d"/><path d="M1 2.500h14" stroke="#8c9196" stroke-width="2"/><use href="#globe" x="4.500" y="5" width="7" height="7"/></svg>浏览 *:80 (http)</a>
              <hr class="mt-px mb-[3px] h-px border-0 bg-[linear-gradient(to_right,transparent,#aaaaaa_25%)]">
              <a href="#advanced" class="block pl-[27px]">高级设置...</a>
              <hr class="mt-px mb-[3px] h-px border-0 bg-[linear-gradient(to_right,transparent,#aaaaaa_25%)]">
              <h3 class="pl-[27px] font-bold text-black">配置</h3>
              <a href="#limits" class="block pl-[27px]">限制...</a>
              <hr class="mt-px mb-[3px] h-px border-0 bg-[linear-gradient(to_right,transparent,#8c8c8c_25%)]">
              <a href="#ftp" class="block pl-[27px]">添加 FTP 发布...</a>
              <hr class="mt-px mb-[3px] h-px border-0 bg-[linear-gradient(to_right,transparent,#8c8c8c_25%)]">
              <a href="#help-topic" class="flex h-5 items-center gap-2 pl-[3px]"><svg class="h-4 w-4"><use href="#help"/></svg>帮助</a>
            </div>
            <div class="flex w-4 flex-col bg-[#f1f1f1]" aria-hidden="true">
              <span class="flex h-[18px] items-center justify-center"><svg class="h-1 w-[7px] rotate-180"><use href="#down"/></svg></span>
              <span class="min-h-0 flex-1"><span class="flex h-[90%] flex-col items-center justify-center gap-[2px] rounded-[2px] border border-[#9a9a9a] bg-[linear-gradient(to_right,#f4f4f4,#dcdde0_48%,#c3c5c9_52%,#d0d1d4)]"><i class="h-px w-2 bg-[#555]"></i><i class="h-px w-2 bg-[#555]"></i><i class="h-px w-2 bg-[#555]"></i></span></span>
              <span class="h-[18px]"></span>
            </div>
          </div>
        </aside>
      </main>

      <footer class="flex h-[23px] shrink-0 items-center bg-[linear-gradient(to_right,#e3e1e2,#efefef)] pl-[5px]">就绪</footer>
    </div>
  </div>

  <!-- Site badge over the lower right corner -->
  <div class="absolute right-0 bottom-0 h-[41px] w-[149px] bg-[#10131a]"></div>
  <div class="absolute right-[5px] bottom-[5px] flex h-[43px] w-[164px] items-center gap-2 bg-white">
    <svg class="h-[43px] w-[61px]" viewBox="0 0 61 43">
      <path d="M1 20L38 0l15 11h-7L37 6 18 18v2z" fill="#19a4e4"/>
      <path d="M14 19h7v12h8v4H13z" fill="#19a4e4"/>
      <path d="M24 17q8-5 14 0t12-3v4q-7 5-13 1t-13 2zM24 24q8-5 14 0t10-2v4q-6 3-11 0t-13 2zM24 31q8-4 13 0t9-1v4q-6 2-9 0t-13 1z" fill="#19a4e4"/>
      <path d="M52 12h3v3h-3zM56 16h4v3h-4zM50 20h4v3h-4zM55 22h3v3h-3zM49 27h3v3h-3zM53 27h3v2h-3z" fill="#19a4e4"/>
      <path d="M12 38h32l-5 4H14z" fill="#19a4e4" opacity=".15"/>
    </svg>
    <strong class="text-[23px] leading-none font-black whitespace-nowrap text-[#222]">系统之家</strong>
  </div>
</body>
</html>
